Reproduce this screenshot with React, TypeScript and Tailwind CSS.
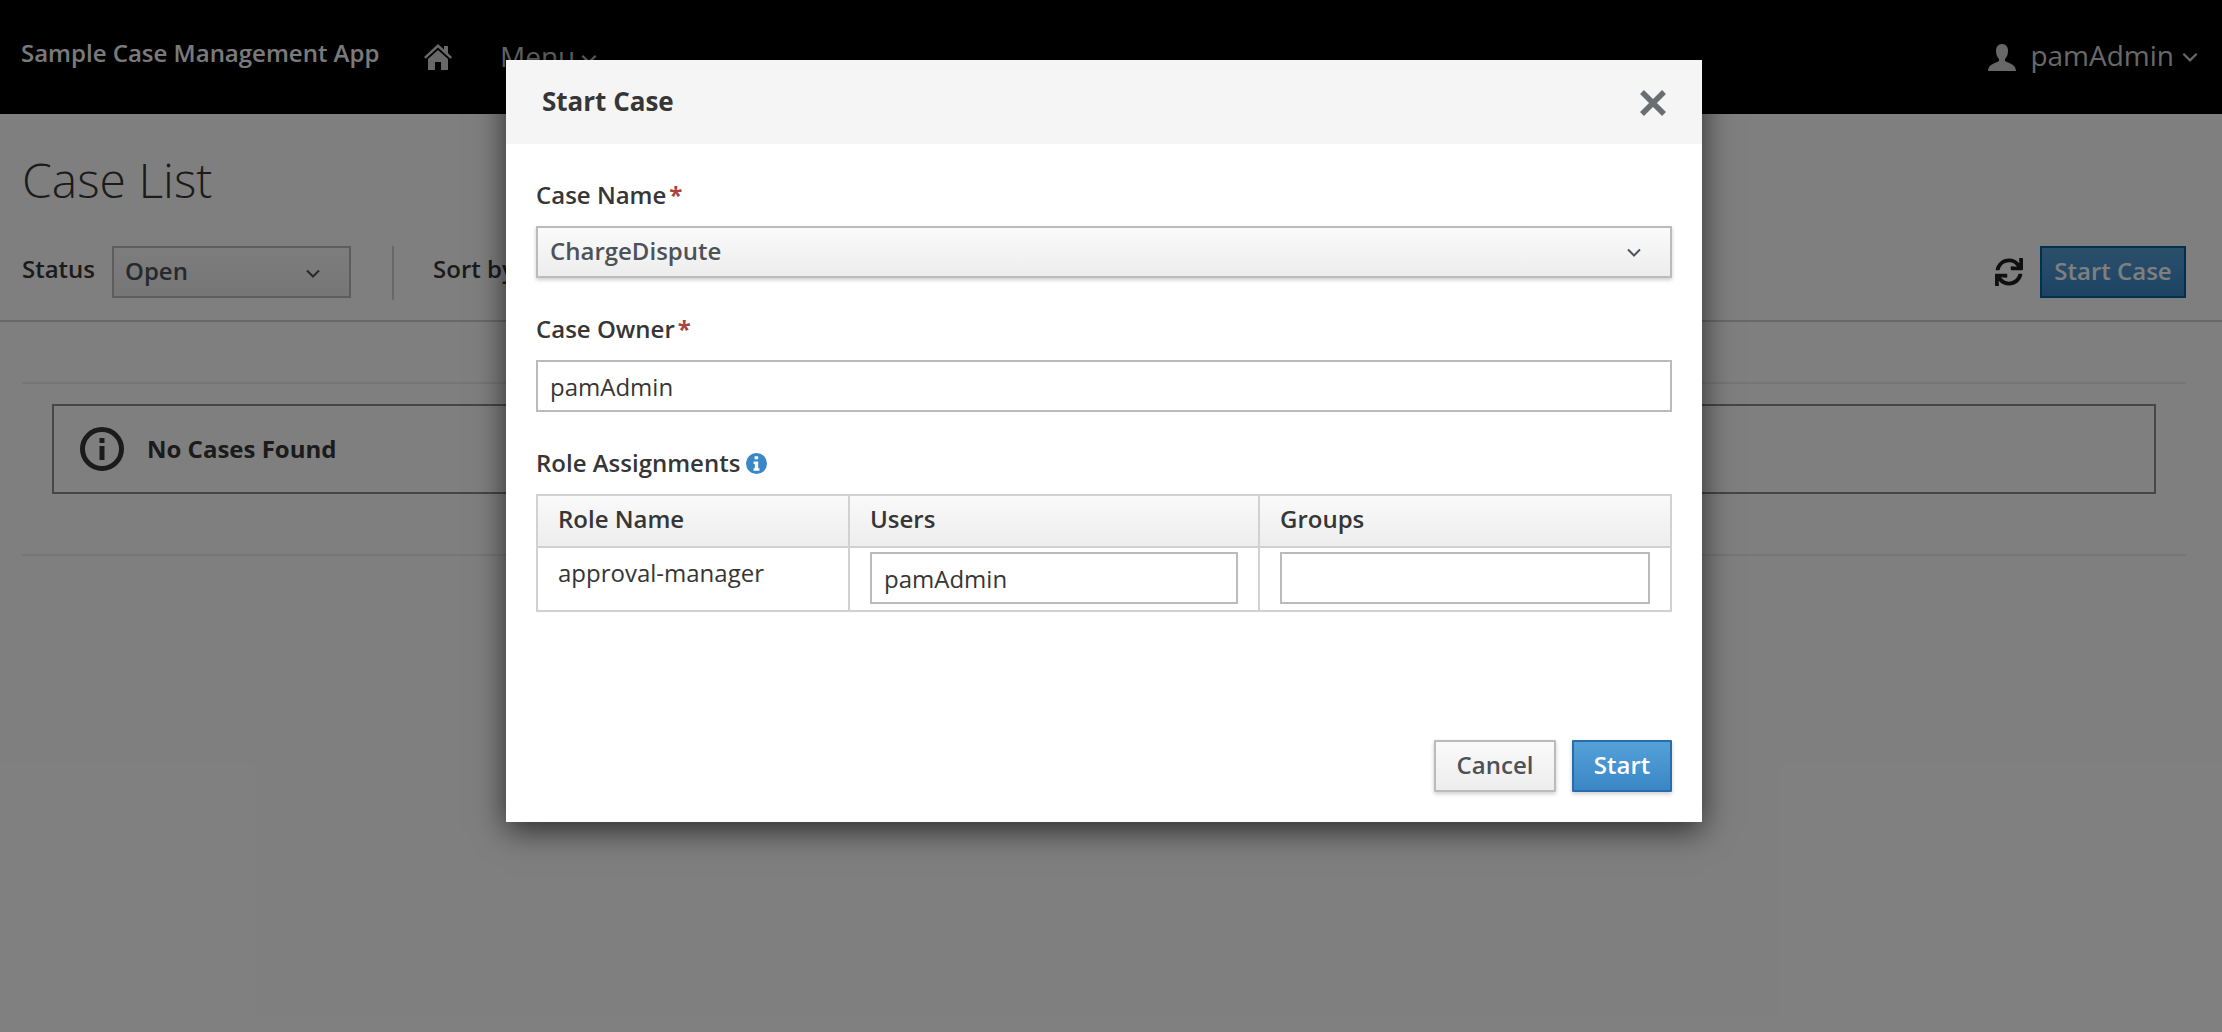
import React from "react";
import { FaSync } from "react-icons/fa";

const Chevron = ({ className }: { className: string }) => (
  <svg viewBox="0 0 14 9" className={className} fill="none" stroke="currentColor" strokeWidth="2">
    <path d="M1 1.5 7 7.5 13 1.5" />
  </svg>
);

const Required = () => (
  <span className="ml-[3px] text-[#a94442] font-bold leading-none">*</span>
);

const Label = ({ children }: { children: React.ReactNode }) => (
  <div className="text-[24px] leading-[34px] font-semibold text-[#363636]">{children}</div>
);

const fieldClass =
  "h-[52px] w-full border-2 border-[#bbbbbb] bg-white px-[12px] text-[24px] text-[#363636] outline-none";

const App = () => {
  return (
    <div className="relative h-screen w-full overflow-hidden bg-white font-['Open_Sans',sans-serif] text-[#1f1f1f]">
      <header className="flex h-[114px] items-center bg-black pl-[21px] pr-[24px] text-[#f5f5f5]">
        <span className="mb-[8px] w-[403px] text-[24px] font-semibold">Sample Case Management App</span>
        <svg viewBox="0 0 28 26" className="h-[26px] w-[28px] text-[#d1d1d1]" fill="currentColor">
          <path d="M14 0 20 5.5V2h4v7.2L28 13l-1.6 1.8L14 3.6 1.6 14.8 0 13zM14 6l10 9v11h-7v-8h-6v8H4V15z" />
        </svg>
        <span className="mb-[2px] ml-[48px] flex items-center gap-[6px] text-[28px] text-[#d1d1d1]">
          Menu
          <Chevron className="mt-[6px] h-[10px] w-[16px]" />
        </span>
        <div className="mb-[4px] ml-auto flex items-center text-[28px] text-[#d1d1d1]">
          <svg viewBox="0 0 28 27" className="mr-[14px] mt-[4px] h-[27px] w-[28px]" fill="currentColor">
            <path d="M14 0c4 0 6 3 6 7 0 3-1 6-3 8v2c3 2 11 3 11 10H0c0-7 8-8 11-10v-2C9 13 8 10 8 7c0-4 2-7 6-7z" />
          </svg>
          pamAdmin
          <Chevron className="ml-[8px] mt-[4px] h-[10px] w-[16px]" />
        </div>
      </header>

      <main>
        <div className="border-b-2 border-[#d1d1d1] pl-[22px] pr-[36px] pb-[20px]">
          <h1 className="pt-[28px] text-[48px] font-light leading-[76px] text-[#363636]">Case List</h1>
          <div className="mt-[28px] flex h-[54px] items-start">
            <span className="mt-[5px] text-[24px] font-semibold text-[#363636]">Status</span>
            <div className="ml-[17px] flex h-[52px] w-[239px] items-center justify-between border-2 border-[#bbbbbb] bg-gradient-to-b from-[#fafafa] to-[#ededed] pl-[11px] pr-[12px] pb-[2px] text-[24px] font-semibold text-[#4d5258]">
              Open
              <Chevron className="mr-[17px] mt-[4px] h-[9px] w-[14px]" />
            </div>
            <div className="ml-[41px] h-[54px] w-[2px] bg-[#d1d1d1]" />
            <span className="ml-[39px] mt-[5px] text-[24px] font-semibold text-[#363636]">Sort by</span>
            <FaSync className="ml-auto mt-[12px] h-[28px] w-[28px] text-[#1f1f1f]" />
            <button className="ml-[17px] h-[52px] w-[146px] border-2 border-[#00659c] bg-gradient-to-b from-[#54a0d8] to-[#3a87c7] pb-[2px] text-[24px] font-semibold text-white">
              Start Case
            </button>
          </div>
        </div>

        <div className="ml-[22px] mr-[36px] mt-[60px] border-y-2 border-[#ededed] pt-[20px] pb-[60px]">
          <div className="ml-[30px] mr-[30px] flex h-[90px] items-center border-2 border-[#8b8d8f] pl-[26px]">
            <svg viewBox="0 0 44 44" className="h-[44px] w-[44px] text-[#363636]">
              <circle cx="22" cy="22" r="19.5" fill="none" stroke="currentColor" strokeWidth="5" />
              <rect x="19.5" y="11" width="5" height="5" fill="currentColor" />
              <rect x="19.5" y="19" width="5" height="14" fill="currentColor" />
            </svg>
            <span className="ml-[23px] text-[24px] font-bold text-[#363636]">No Cases Found</span>
          </div>
        </div>
      </main>

      <div className="absolute inset-0 bg-black/50 pl-[506px] pt-[60px]">
        <div className="flex h-[762px] w-[1196px] flex-col bg-white shadow-[0_8px_30px_rgba(0,0,0,0.65)]">
          <div className="flex h-[84px] shrink-0 items-center justify-between bg-[#f5f5f5] pl-[36px] pr-[36px]">
            <h2 className="mb-[2px] text-[26px] font-bold text-[#363636]">Start Case</h2>
            <svg viewBox="0 0 26 26" className="mt-[2px] h-[26px] w-[26px] text-[#6a6e73]" fill="none" stroke="currentColor" strokeWidth="5.5">
              <path d="M2 2 24 24M24 2 2 24" />
            </svg>
          </div>

          <div className="flex flex-1 flex-col pl-[30px] pr-[30px] pb-[30px]">
            <div className="mt-[34px]">
              <Label>
                Case Name
                <Required />
              </Label>
            </div>
            <div className="mt-[14px] flex h-[52px] items-center justify-between border-2 border-[#bbbbbb] bg-gradient-to-b from-[#fafafa] to-[#ededed] pl-[12px] pr-[29px] pb-[2px] text-[24px] font-semibold text-[#4d5258] shadow-[0_2px_4px_rgba(0,0,0,0.2)]">
              ChargeDispute
              <Chevron className="mt-[2px] h-[9px] w-[14px]" />
            </div>

            <div className="mt-[34px]">
              <Label>
                Case Owner
                <Required />
              </Label>
            </div>
            <input className={`mt-[14px] ${fieldClass}`} defaultValue="pamAdmin" />

            <div className="mt-[34px] flex items-center">
              <Label>Role Assignments</Label>
              <svg viewBox="0 0 20 20" className="ml-[6px] h-[21px] w-[21px] text-[#3a87c7]">
                <circle cx="10" cy="10" r="10" fill="currentColor" />
                <path d="M8.2 3h3.4v3H8.2zM7.2 8h4.4v6.6h1.2V17H7.2v-2.4h1.2v-4.2H7.2z" fill="#fff" />
              </svg>
            </div>

            <table className="mt-[14px] w-full table-fixed border-collapse text-[24px] text-[#363636]">
              <thead>
                <tr className="h-[52px] bg-gradient-to-b from-[#fafafa] to-[#ededed]">
                  <th className="w-[312px] border-2 border-[#d1d1d1] pb-[4px] pl-[20px] text-left font-semibold">Role Name</th>
                  <th className="w-[410px] border-2 border-[#d1d1d1] pb-[4px] pl-[20px] text-left font-semibold">Users</th>
                  <th className="border-2 border-[#d1d1d1] pb-[4px] pl-[20px] text-left font-semibold">Groups</th>
                </tr>
              </thead>
              <tbody>
                <tr className="h-[64px]">
                  <td className="border-2 border-[#d1d1d1] pb-[13px] pl-[20px] align-middle">approval-manager</td>
                  <td className="border-2 border-[#d1d1d1] px-[20px] pb-[2px] align-middle">
                    <input className={fieldClass} defaultValue="pamAdmin" />
                  </td>
                  <td className="border-2 border-[#d1d1d1] px-[20px] pb-[2px] align-middle">
                    <input className={fieldClass} />
                  </td>
                </tr>
              </tbody>
            </table>

            <div className="mt-auto flex justify-end gap-[16px]">
              <button className="h-[52px] w-[122px] rounded-[1px] border-2 border-[#bbbbbb] bg-gradient-to-b from-[#fafafa] to-[#ededed] pb-[2px] text-[24px] font-semibold text-[#4d5258] shadow-[0_2px_4px_rgba(0,0,0,0.2)]">
                Cancel
              </button>
              <button className="h-[52px] w-[100px] rounded-[1px] border-2 border-[#2a6ca8] bg-gradient-to-b from-[#54a0d8] to-[#3a87c7] pb-[2px] text-[24px] font-semibold text-white shadow-[0_2px_4px_rgba(0,0,0,0.2)]">
                Start
              </button>
            </div>
          </div>
        </div>
      </div>
    </div>
  );
};

export default App;
